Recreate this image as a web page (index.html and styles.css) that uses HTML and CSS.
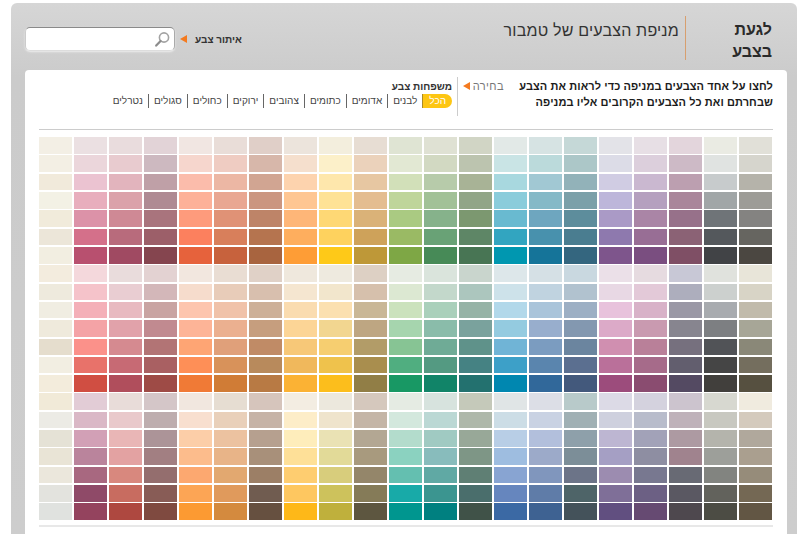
FILE: index.html
```html
<!DOCTYPE html>
<html lang="he" dir="rtl">
<head>
    <meta charset="UTF-8">
    <meta name="viewport" content="width=device-width, initial-scale=1.0">
    <title>מניפת הצבעים של טמבור</title>
    <link rel="stylesheet" href="styles.css">
</head>
<body>

<div class="page">
    <!-- כותרת -->
    <header class="top-bar">
        <h1 class="brand">לגעת<br>בצבע</h1>
        <h2 class="page-title">מניפת הצבעים של טמבור</h2>
        <div class="search-area">
            <span class="search-label">איתור צבע</span>
            <span class="arrow"></span>
            <div class="search-box">
                <svg class="search-icon" width="17" height="17" viewBox="0 0 17 17">
                    <circle cx="10" cy="6.5" r="4.6" fill="#fff" stroke="#a3a3a3" stroke-width="1.6"/>
                    <path d="M6.6 10 L2.2 14.6" stroke="#8c8c8c" stroke-width="2.2" stroke-linecap="round"/>
                </svg>
            </div>
        </div>
    </header>

    <main class="panel">
        <div class="panel-head">
            <p class="intro">לחצו על אחד הצבעים במניפה כדי לראות את הצבע<br>שבחרתם ואת כל הצבעים הקרובים אליו במניפה</p>
            <div class="pick-label">
                <span>בחירה</span>
                <span class="arrow"></span>
            </div>
            <div class="families">
                <div class="families-title">משפחות צבע</div>
                <nav class="family-links">
                    <a href="#" class="active">הכל</a>
                    <a href="#">לבנים</a>
                    <a href="#">אדומים</a>
                    <a href="#">כתומים</a>
                    <a href="#">צהובים</a>
                    <a href="#">ירוקים</a>
                    <a href="#">כחולים</a>
                    <a href="#">סגולים</a>
                    <a href="#">נטרלים</a>
                </nav>
            </div>
        </div>

        <div id="fan" class="fan"></div>
    </main>
</div>

<script src="script.js"></script>
</body>
</html>
```

FILE: styles.css
```css
html, body {
    margin: 0;
    height: 100%;
    overflow: hidden;
    background-color: #fff;
}

body {
    font-family: "Liberation Sans", Arial, sans-serif;
    color: #222;
}

.page {
    margin: 3px 3px 0 11px;
    height: 531px;
    padding: 0 10px 0 14px;
    box-sizing: border-box;
    border-radius: 6px 6px 0 0;
    background: linear-gradient(180deg, #d6d6d6 0%, #cbcbcb 14%, #cdcdcd 100%);
    display: flex;
    flex-direction: column;
}

.top-bar {
    display: flex;
    align-items: flex-start;
    height: 67px;
}

.brand {
    margin: 16px 15px 0 0;
    width: 86px;
    font-size: 16px;
    line-height: 22px;
    font-weight: bold;
    color: #2a2a2a;
}

.page-title {
    margin: 13px 0 0 0;
    padding: 5px 6px 0 0;
    height: 39px;
    border-right: 1px solid #d79f6f;
    font-size: 16px;
    line-height: 20px;
    letter-spacing: 0.2px;
    font-weight: normal;
    color: #333;
}

.search-area {
    margin: 24px auto 0 0;
    display: flex;
    align-items: center;
}

.search-label {
    margin-left: 8px;
    font-size: 10px;
    font-weight: bold;
    color: #333;
}

.arrow {
    width: 0;
    height: 0;
    border-top: 4px solid transparent;
    border-bottom: 4px solid transparent;
    border-right: 7px solid #f47a1f;
}

.search-box {
    width: 150px;
    height: 24px;
    box-sizing: border-box;
    margin-right: 5px;
    border: 1px solid #8a8a8a;
    border-bottom-color: #ddd;
    border-left-color: #ccc;
    border-right-color: #aaa;
    border-radius: 5px;
    background-color: #fff;
    box-shadow: 0 1px 2px #eee;
    display: flex;
    align-items: center;
    padding-right: 3px;
}

.panel {
    flex: 1;
    background-color: #fff;
    border-radius: 4px 4px 0 0;
    padding: 7px 14px 0 14px;
}

.panel-head {
    display: flex;
    align-items: flex-start;
    height: 52px;
    border-bottom: 1px solid #ccc;
}

.intro {
    margin: 0;
    padding-top: 1px;
    width: 269px;
    font-size: 11px;
    line-height: 16px;
    letter-spacing: 0.1px;
    font-weight: bold;
    color: #1c1c1c;
}

.pick-label {
    padding-top: 1px;
    width: 46px;
    display: flex;
    align-items: center;
    gap: 3px;
    font-size: 11px;
    line-height: 16px;
    color: #777;
    letter-spacing: 0.4px;
}

.families {
    height: 39px;
    border-right: 1px solid #ccc;
    padding-right: 5px;
}

.families-title {
    padding-top: 3px;
    font-size: 10px;
    line-height: 13px;
    font-weight: bold;
    color: #333;
}

.family-links {
    margin-top: 1px;
    display: flex;
    align-items: center;
    font-size: 10px;
    line-height: 14px;
}

.family-links a {
    color: #444;
    text-decoration: none;
    padding: 0 5px;
    border-right: 1px solid #666;
}

.family-links a:nth-child(2) {
    border-right: none;
}

.family-links a.active {
    padding: 0 6px;
    height: 14px;
    color: #fff;
    background-color: #fdc613;
    border-right: none;
    border-left: 1px solid #a88a2a;
    border-radius: 0 7px 7px 0;
}

.fan {
    margin-top: 7px;
    height: 383px;
    padding: 0 1px 5px 0;
    border-bottom: 2px solid #e8e8e8;
    display: grid;
    grid-auto-flow: column;
    grid-template-rows: repeat(21, 1fr);
    grid-template-columns: repeat(21, 1fr);
    gap: 1.7px;
    direction: ltr;
}
```

FILE: script.js
```js
// עמודות המניפה משמאל לימין, 21 גוונים בכל עמודה
const fanColumns = [
    'f3efe5 f3efe4 f1eadb f3f1e5 f1ebdb ece6d9 f2eee1 f3ecde eeeadd f0ede2 efeadc e5ddcd f2eee2 f3ecdc f1ead8 ecebe5 e5e2d6 e9e4d6 ebe7dc e3e3de e0e2df',
    'ebe0e2 ebd6db ebc3d1 e8aebd dc92a8 d4708a b8506f f4d8dc f5c3ca f4b0b8 f4a3a6 fb918a e8726a d04e42 e2ccd6 dab8c6 d2a0b6 ba849c a86880 8f4a68 94435e',
    'e9dcdd e8cbcf e2b4bd dba2aa cf8995 b86b7c a04a62 e9dcdc e9cdd2 e8bac0 e1a2aa d58a90 c76a74 b04e5c e8dcd9 e9c9cb e9b6b6 e3a2a2 d8887e c86c60 ae4840',
    'e2d3d7 cdb9c0 bfa0a7 af8a93 a9747d 9c5f69 85454f e3d2d2 d3b7b9 c9a4a2 c18a90 b27475 a96062 9e4b46 d4c6c8 beadae ac9498 a27f82 946e6e 885c56 7f4a40',
    'f1e6e2 f6d6cd fbbcab fdb199 fe9b7c fc805e e6623c f2e7df f6dccc fdc5ae fdb497 fea574 fe8f57 f07a36 f1e7df f8dfcf fccea8 fcbc8c fca870 fca555 fc9a32',
    'e9ddd8 efccc2 ecb7a4 e9a792 e09276 d87f5b c7623d e9ddd3 e8ccb9 f0c2a9 ebb090 e0a07a d8925a d07c36 e6ddd2 e9d0ba ecc2a0 e8b488 e2a870 e09a5c d48a3e',
    'e0cfc8 d7b7aa d1a592 cb9680 be8468 b5744f a8643f e0d1c7 d8bfae cdb098 c69e7e c08b66 b88a5c b87a44 d6c5bc c6b3a6 b6a08f a8907a 9c7f66 705c50 665040',
    'ece4dc f5dfcd fdd3ae fec692 feb678 feae5e fe9d36 efe8dd f5e6d0 fadcb0 fcd596 f7c878 f0b85c fbb234 f3ede2 fdedc8 feedbb fee098 fecd70 fec760 feb818',
    'f3eedd fcf0c9 fee7ac fee296 fed875 fed25e fec918 eeeadf f2e6cc fbe0b0 f2d690 f6ce70 efc24c fcbe1c ece8dd efe4cc eae2b4 e2da98 d8cd7c cdc25c bfb03c',
    'e7ddd3 ebd2bb e7c7a2 e4bd90 dab278 cea25a be9838 ddd0c4 d6c0ac c9b796 bea682 b29c68 a98e4e 917e46 d5c8bd c4b5a6 b3a793 a89a7e 94866a 857b58 5d5640',
    'dfe4d3 e2e8d3 d2e0b9 bfd59a aaca82 9aba64 7ea745 e6ebe2 dce8d2 cbe2bd a6d5ae 87c494 50ae80 189864 e5ebe3 d3e8dd b3dccc 8bd2c0 64bfb0 18aaa8 00968f',
    'dfe1d3 d2d9c2 b7cbaa a2c197 86b28b 69a276 478a57 dae4dc c3d8cb aad0bb 8abcaa 6fab96 549a82 118468 d7e3de bbd8d4 a0cac2 88bcbc 60a9a4 3b9590 008080',
    'd1d5c5 bcc4af a8b396 91a587 7c9870 5e8666 487554 c9d5cd acc6be 96b3a6 7aa29d 5f928a 458283 23716f c5c9ba aeb8aa 98a898 7e9686 5f7f74 4a6e6c 405248',
    'e2e9e7 c9e4e5 a8d8df 8accdb 69bad0 32a5c0 0097b0 dde7ea cde2ea b2d8ea 94cbe0 70b4d6 3da0c8 0087b0 e0e5e6 ccdde6 b8cee6 9ebde0 88a4d2 6686be 3b69a4',
    'd6e3e3 bbdadb a1c8d3 85b9c7 6ea6bf 4891ad 157499 d5e0e5 c0d3e0 a9c4da 98aecd 7b9cc0 5a85ae 31689a dcdee6 c9d2e3 b2bfdc 9caac9 8096bd 5f7ca8 3e6292',
    'c5d8d7 acc7c8 92b2b9 7ba0a9 5d8d9c 4a7d90 34667f c9d8e0 b1c2cf 9cafc4 8398b0 6b859f 5b6f90 43597c b8caca a0b0b4 8ea0aa 7c8e98 6c7488 4e6468 44525a',
    'e3e3e8 dcdce7 d0cce3 bdb6da aa9ac6 8e79ae 7e558c ebe0e8 e8d8e4 e8c2dc dcaac8 d08fb0 ba709a 9c4c7c dcdae6 ced0de bdb6d2 a59fc4 9c8cb0 7f6f98 614f80',
    'e7dfe5 dccfdc cab8d0 b5a0bf aa85a6 986e95 7a4e80 e6dbe0 e3c9d8 d8b2c8 c99ab0 b98099 a66b8a 8a4c70 d4d2de b8bccb a2a2b8 8e8ea2 787890 6c6084 664a72',
    'e3d5dc cdbac6 bc9fb0 a9869a 97718a 8b6275 7f4f65 c8c8d6 adaebd 9a98a5 87858f 76707e 625e6e 544a62 ccc4ce bfb2ba ad9aa2 a0838e 686a74 5a5862 4e484e',
    'eaebe3 e0e3e1 c7cbcc a1a6a7 6f7478 54585c 414346 e0e2dd ccd0ce a8abaf 7d7f82 515357 454545 413f3c d7d8d0 c8c8c0 b4b4ac 9d9f9a 828480 62625c 4c4c44',
    'e1e0d8 d6d5cd b5b3aa 9d9c97 848381 666560 4b4741 e8e5d9 d8d4c6 c1bbab a7a697 8a8878 746e5e 565040 f0ebdf d4cabd b0a89c aa9f8f 968c7a 746854 625644'
];

const fan = document.getElementById('fan');

fanColumns.forEach(column => {
    column.split(' ').forEach(color => {
        const cell = document.createElement('div');
        cell.className = 'swatch';
        cell.style.backgroundColor = '#' + color;
        fan.appendChild(cell);
    });
});
```
